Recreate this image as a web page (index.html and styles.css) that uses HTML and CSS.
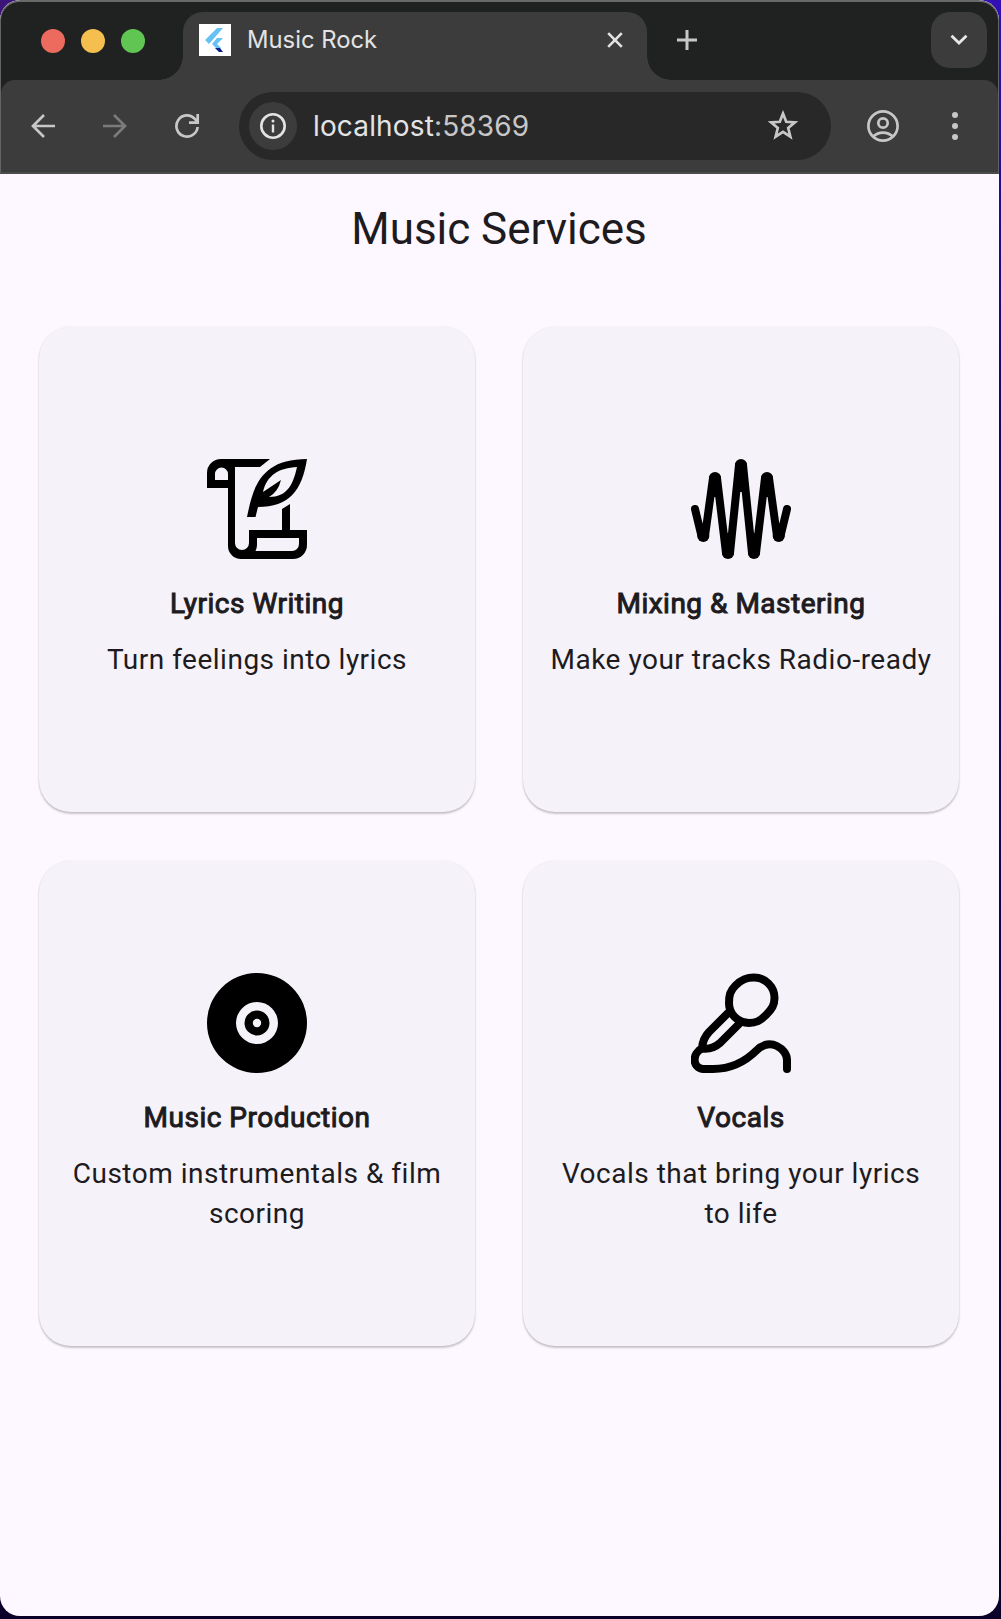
FILE: index.html
```html
<!DOCTYPE html>
<html lang="en">
<head>
<meta charset="utf-8">
<title>Music Rock</title>
<link rel="stylesheet" href="styles.css">
</head>
<body>
<div class="window">
  <header class="chrome">
    <div class="tabstrip">
      <div class="lights"><i class="light red"></i><i class="light yellow"></i><i class="light green"></i></div>
      <div class="tab">
        <svg class="favicon" width="32" height="32" viewBox="0 0 32 32"><path fill="#fff" d="M0 0h32v32H0z"/><path fill="#66c1f5" d="M18 4h6L10 20l-4-4zM18 14h6l-6 6 4 4-4 1-5-5z"/><path fill="#0a1f86" d="M16 24h5l3 4h-4z"/></svg>
        <span class="tab-title">Music Rock</span>
        <svg width="16" height="16" viewBox="0 0 16 16"><path d="M1.200 1.200l13.600 13.600M14.800 1.200L1.200 14.800" stroke="#e3e3e3" stroke-width="2.600"/></svg>
      </div>
      <svg class="plus" width="20" height="20" viewBox="0 0 20 20"><path d="M10 0v20M0 10h20" stroke="#c7c7c7" stroke-width="3"/></svg>
      <div class="tab-search"><svg width="18" height="12" viewBox="0 0 18 12"><path d="M1.500 1.700L9 9l7.500-7.300" fill="none" stroke="#e8e8e8" stroke-width="2.800"/></svg></div>
    </div>
    <div class="toolbar">
      <svg width="24" height="24" viewBox="0 0 24 24"><path d="M24 12H2M13 1L2 12l11 11" fill="none" stroke="#c7c7c7" stroke-width="2.700"/></svg>
      <svg class="forward" width="24" height="24" viewBox="0 0 24 24"><path d="M0 12h22M11 1l11 11-11 11" fill="none" stroke="#7b7b7b" stroke-width="2.700"/></svg>
      <svg class="reload" width="26" height="26" viewBox="0 0 26 26"><path d="M23.600 14A10.600 10.600 0 1 1 20.800 5.800l2.300 2.600M23.700 1v8.700H15" fill="none" stroke="#c7c7c7" stroke-width="2.700"/></svg>
      <div class="omnibox">
        <span class="info"><svg width="26" height="26" viewBox="0 0 26 26"><circle cx="13" cy="13" r="11.700" fill="none" stroke="#e3e3e3" stroke-width="2.600"/><path d="M13 11.500v8" stroke="#e3e3e3" stroke-width="2.400"/><circle cx="13" cy="7.900" r="1.500" fill="#e3e3e3"/></svg></span>
        <span class="url">localhost<span class="port">:58369</span></span>
        <svg class="star" width="32" height="32" viewBox="0 0 32 32"><path d="M16 3.600l3.200 8.200 8.700.6-6.700 5.600 2.200 8.700-7.400-4.800-7.400 4.800 2.200-8.700-6.700-5.600 8.700-.6z" fill="none" stroke="#c7c7c7" stroke-width="2.700"/></svg>
      </div>
      <svg class="profile" width="32" height="32" viewBox="0 0 32 32"><g fill="none" stroke="#c7c7c7" stroke-width="2.700"><circle cx="16" cy="16" r="14.600"/><circle cx="16" cy="13" r="4.700"/><path d="M6.200 26.500c5.500-5.300 14.100-5.300 19.600 0"/></g></svg>
      <svg class="more" width="6" height="28" viewBox="0 0 6 28"><g fill="#c7c7c7"><circle cx="3" cy="3" r="3"/><circle cx="3" cy="14" r="3"/><circle cx="3" cy="25" r="3"/></g></svg>
    </div>
  </header>
  <main>
    <h1>Music Services</h1>
    <section class="grid">
      <article class="card">
        <svg width="100" height="100" viewBox="0 0 100 100"><path fill-rule="evenodd" d="M14 0h49l-10 8H28v76a7 7 0 0 0 14 0V71h33V50l8-5v26h17v15a14 14 0 0 1-14 14H34a13 13 0 0 1-13-13V29H0V14A14 14 0 0 1 14 0zM8 21h13v-6a6.500 6.500 0 0 0-13 0zM50 79v7a13 13 0 0 1-1.500 6H85a7 7 0 0 0 7-7v-6zM40 58C46 29 53 0 100 0C95 32 82 48 51 48L48.500 58zM56 33C60 16 72 9 90 8C86 26 80 38 62 38Q71 33 74 21z"/></svg>
        <h2>Lyrics Writing</h2>
        <p>Turn feelings into lyrics</p>
      </article>
      <article class="card">
        <svg width="100" height="100" viewBox="0 0 100 100"><path fill="none" stroke="#000" stroke-width="8" stroke-linecap="round" stroke-linejoin="round" d="M4 50l6.500 27h3.500L22 19h4l9 75h4L48 6h4l9 88h4l9-75h4l8 58h3.500L96 50"/><circle cx="24" cy="19" r="6"/><circle cx="50" cy="6" r="6"/><circle cx="76" cy="19" r="6"/><circle cx="12.300" cy="77" r="6"/><circle cx="37" cy="94" r="6"/><circle cx="63" cy="94" r="6"/><circle cx="87.700" cy="77" r="6"/><path d="M24 19l2 19h-4zM50 6l3 27h-6zM37 94l-3-20h6zM63 94l-3-20h6zM76 19l2 19h-4z"/></svg>
        <h2>Mixing &amp; Mastering</h2>
        <p>Make your tracks Radio-ready</p>
      </article>
      <article class="card">
        <svg width="100" height="100" viewBox="0 0 100 100"><path fill-rule="evenodd" d="M50 0a50 50 0 1 1 0 100A50 50 0 0 1 50 0zm0 29a21 21 0 1 0 0 42 21 21 0 0 0 0-42zm0 8.500a12.500 12.500 0 1 1 0 25 12.500 12.500 0 0 1 0-25zm0 8.300a4.200 4.200 0 1 0 0 8.400 4.200 4.200 0 0 0 0-8.400z"/></svg>
        <h2>Music Production</h2>
        <p>Custom instrumentals &amp; film scoring</p>
      </article>
      <article class="card">
        <svg width="100" height="100" viewBox="0 0 100 100"><g fill="none" stroke="#000" stroke-width="8" stroke-linecap="round" stroke-linejoin="round"><path d="M44.500 12.500C51 6 56 4.500 63 4.500A20.500 20.500 0 0 1 83.500 25C83.500 32 81 36 75 42S65 50 58 50A20 20 0 0 1 38 30C38 22 39 18 44.500 12.500z"/><path d="M38 39L18 59q-6.500 7-7 16.500Q21 77 29 70L49 50M11 75.500C1 80 1 95 12 96H22Q47 96 66 77C79 64 96 76 96 87V96"/></g></svg>
        <h2>Vocals</h2>
        <p>Vocals that bring your lyrics to life</p>
      </article>
    </section>
  </main>
</div>
</body>
</html>
```
FILE: styles.css
```css
* { box-sizing: border-box; }
html { height: 100%; }
body {
  margin: 0;
  height: 1619px;
  padding: 0 2px 3px 0;
  overflow: hidden;
  background: linear-gradient(90deg, #3d1479 0 30px, transparent 30px) 0 0 / 100% 40px no-repeat,
    linear-gradient(#3210b5, #1a0860 25%, #0b0028);
}
svg { display: block; flex: none; }
.window {
  height: 1616px;
  background: #fdf8ff;
  border-radius: 20px;
  overflow: hidden;
}
.chrome {
  height: 174px;
  background: #202221;
  border: 1px solid #626463;
  border-top: 2px solid #686a69;
  border-bottom: 2px solid #4a4b4b;
  border-radius: 20px 20px 0 0;
}
.tabstrip { display: flex; height: 78px; padding-left: 40px; }
.lights { display: flex; gap: 16px; padding-top: 27px; width: 142px; flex: none; }
.light { width: 24px; height: 24px; border-radius: 50%; }
.red { background: #ed6a5e; }
.yellow { background: #f5bf4f; }
.green { background: #61c554; }
.tab {
  position: relative;
  display: flex;
  align-items: center;
  width: 464px;
  height: 68px;
  margin-top: 10px;
  padding: 0 24px 12px 16px;
  background: #3c3c3c;
  border-radius: 20px 20px 0 0;
  font: 23.8px/30px Inter, sans-serif;
  color: #e3e3e3;
}
.tab::before, .tab::after {
  content: "";
  position: absolute;
  bottom: 0;
  width: 24px;
  height: 24px;
}
.tab::before { right: 100%; background: radial-gradient(circle at 0 0, transparent 23.5px, #3c3c3c 24px); }
.tab::after { left: 100%; background: radial-gradient(circle at 100% 0, transparent 23.5px, #3c3c3c 24px); }
.tab-title { flex: 1; padding-left: 16px; }
.plus { margin: 28px 0 0 30px; }
.tab-search {
  display: grid;
  place-items: center;
  width: 56px;
  height: 56px;
  margin: 10px 11px 0 auto;
  border-radius: 19px;
  background: #3c3c3c;
}
.toolbar {
  display: flex;
  align-items: center;
  height: 92px;
  padding-left: 30px;
  background: #3c3c3c;
  border-radius: 14px 14px 0 0;
}
.forward { margin-left: 48px; }
.reload { margin-left: 47px; }
.omnibox {
  display: flex;
  align-items: center;
  width: 592px;
  height: 68px;
  margin-left: 39px;
  padding: 0 32px 0 10px;
  border-radius: 34px;
  background: #282828;
}
.info { display: grid; place-items: center; width: 48px; height: 48px; border-radius: 50%; background: #3c3c3c; }
.url { flex: 1; margin-left: 16px; font: 28px/36px Inter, sans-serif; letter-spacing: .15px; color: #e3e3e3; }
.port { color: #c7c7c7; }
.profile { margin-left: 36px; }
.more { margin-left: 53px; }
main { font-family: Roboto, sans-serif; color: #1d1b20; }
h1 {
  margin: 0;
  padding: 27px 1px 0 0;
  font-size: 44px;
  font-weight: 400;
  line-height: 56px;
  letter-spacing: -.03px;
  text-align: center;
}
.grid {
  display: grid;
  grid-template-columns: 1fr 1fr;
  grid-auto-rows: 485.5px;
  gap: 48.5px 48px;
  padding: 69.5px 40px 0 39px;
}
.card {
  display: flex;
  flex-direction: column;
  align-items: center;
  justify-content: center;
  padding: .5px 24px 0;
  border-radius: 32px;
  background: #f5f2f9;
  box-shadow: 0 2px 2px rgba(0, 0, 0, .2), 0 0 2px rgba(0, 0, 0, .1);
  text-align: center;
}
h2, p { margin: 0; font-size: 28px; font-weight: 400; line-height: 40px; letter-spacing: .5px; }
h2 { margin: 25px 0 16px; -webkit-text-stroke: 1px #1d1b20; }
```
